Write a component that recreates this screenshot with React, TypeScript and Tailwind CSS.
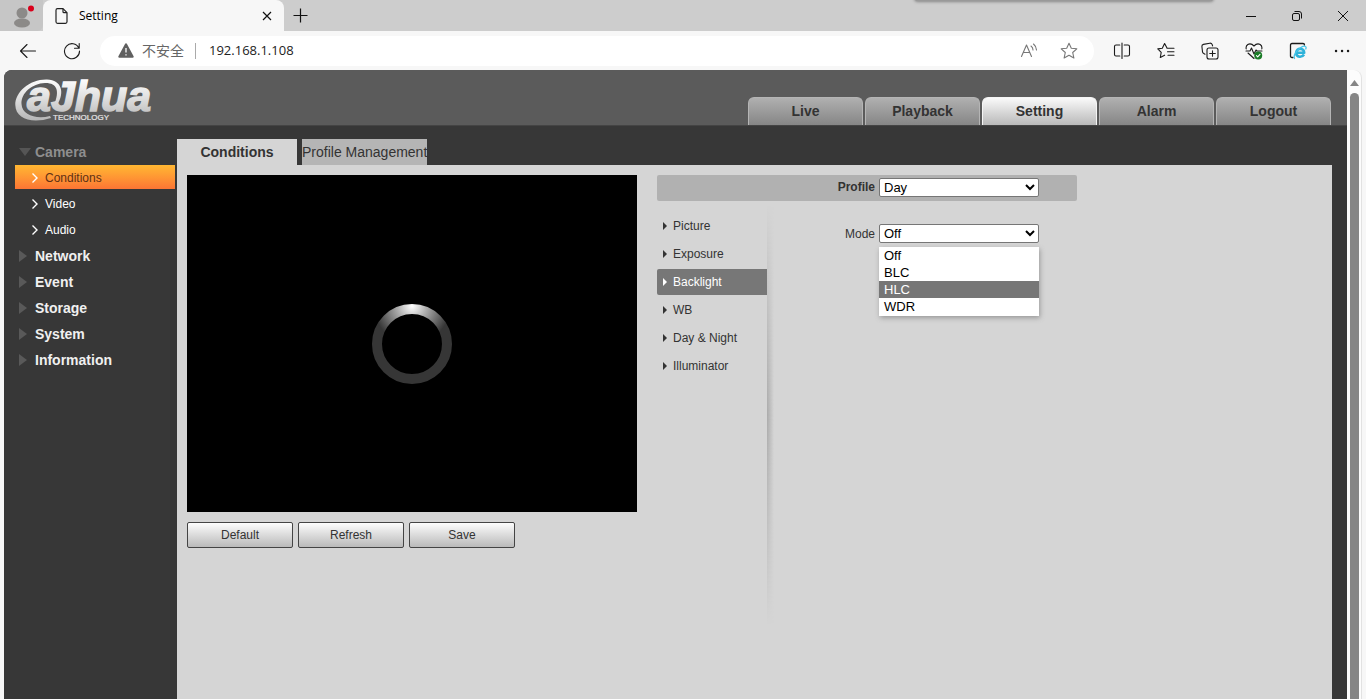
import { useState } from "react";
import type { ReactNode } from "react";

const navTabs = ["Live", "Playback", "Setting", "Alarm", "Logout"];
const cameraItems = ["Conditions", "Video", "Audio"];
const menuGroups = ["Network", "Event", "Storage", "System", "Information"];
const imageMenu = ["Picture", "Exposure", "Backlight", "WB", "Day & Night", "Illuminator"];
const modes = ["Off", "BLC", "HLC", "WDR"];

const Icon = ({ size = 18, children }: { size?: number; children: ReactNode }) => (
  <svg width={size} height={size} viewBox="0 0 18 18" fill="none" stroke="currentColor" strokeWidth="1.1" strokeLinecap="round" strokeLinejoin="round">
    {children}
  </svg>
);

const TabStrip = () => (
  <div className="relative flex h-[31px] items-stretch bg-[#cdcdcd] text-black">
    <button aria-label="Profile" className="flex w-[43px] items-center justify-end rounded-br-md bg-[#c6c6c6] pr-2">
      <svg width="24" height="24" viewBox="0 0 24 24">
        <circle cx="11" cy="9" r="5.500" fill="#8c8a88" />
        <ellipse cx="11" cy="19" rx="8" ry="4.500" fill="#8c8a88" />
        <circle cx="20" cy="4.500" r="3" fill="#d9001b" />
      </svg>
    </button>
    <div className="flex w-[241px] items-center rounded-t-lg bg-[#f7f7f7] pl-3 pr-2">
      <svg width="14" height="16" viewBox="0 0 14 16" fill="none" stroke="#222" strokeWidth="1.200" strokeLinejoin="round">
        <path d="M2.500.700h5.500l4 4v9.100q0 1.500-1.500 1.500h-8q-1.500 0-1.500-1.500v-11.600q0-1.500 1.500-1.500z" />
        <path d="M8 .700v3q0 1 1 1h3" />
      </svg>
      <span className="ml-[10px] grow text-[12px]">Setting</span>
      <button aria-label="Close tab" className="p-1">
        <svg width="10" height="10" viewBox="0 0 10 10" stroke="#111" strokeWidth="1.200"><path d="M1 1l8 8M9 1l-8 8" /></svg>
      </button>
    </div>
    <button aria-label="New tab" className="px-[9px]">
      <svg width="15" height="15" viewBox="0 0 15 15" stroke="#111" strokeWidth="1.200"><path d="M7.500 0.500v14M.500 7.500h14" /></svg>
    </button>
    <div className="grow" />
    <div className="flex">
      <button aria-label="Minimize" className="flex w-[46px] items-center justify-center">
        <svg width="10" height="10" viewBox="0 0 10 10" stroke="#111"><path d="M0 5.500h10" /></svg>
      </button>
      <button aria-label="Restore" className="flex w-[46px] items-center justify-center">
        <svg width="10" height="10" viewBox="0 0 10 10" fill="none" stroke="#111">
          <rect x=".5" y="2.500" width="7" height="7" rx="1.500" />
          <path d="M2.500.500h4.500q2.500 0 2.500 2.500v4.500" />
        </svg>
      </button>
      <button aria-label="Close" className="flex w-[46px] items-center justify-center">
        <svg width="10" height="10" viewBox="0 0 10 10" stroke="#111"><path d="M0 0l10 10M10 0L0 10" /></svg>
      </button>
    </div>
    <div className="absolute right-[152px] top-[-3px] h-1 w-[300px] rounded-b bg-[#999] shadow-[0_1px_3px_#888]" />
  </div>
);

const Toolbar = () => (
  <div className="flex h-[39px] items-center bg-[#f7f7f7] text-[#1b1b1b]">
    <button aria-label="Back" className="ml-[19px]">
      <Icon><path d="M16.500 9H1.500M8 2.500L1.500 9l6.500 6.500" /></Icon>
    </button>
    <button aria-label="Reload" className="ml-[26px]">
      <Icon><path d="M15.800 6A7.500 7.500 0 1 0 16.500 9M16.200 1.500v4.700h-4.700" /></Icon>
    </button>
    <div className="ml-[19px] flex h-[30px] grow items-center rounded-full bg-white pl-[18px] pr-4">
      <svg width="16" height="15" viewBox="0 0 16 15">
        <path d="M8 .300q.700 0 1 .600l6.600 12.300q.500 1.500-1 1.500H1.400q-1.500 0-1-1.500L7 .900q.300-.600 1-.600z" fill="#606060" />
        <path d="M8 5v4.500M8 11.200v1.300" stroke="#fff" strokeWidth="1.300" />
      </svg>
      <span className="ml-2 text-[14px] text-[#666]">不安全</span>
      <span className="ml-[11px] mr-[13px] h-4 w-px shrink-0 bg-[#aaa]" />
      <input aria-label="Address" defaultValue="192.168.1.108" className="min-w-0 grow bg-transparent text-[13px] text-[#222] outline-none" />
      <button aria-label="Read aloud" className="text-[#777]">
        <Icon><path d="M1.500 14.500L6.500 3l5 11.500M3.300 10.500h6.400M11 4q2 1.500 2 4M13.500 2q3 2.500 3 6" /></Icon>
      </button>
      <button aria-label="Add to favorites" className="ml-[22px] text-[#777]">
        <Icon><path d="M9 1.200l2.300 5 5.500.600-4.100 3.700 1.200 5.500L9 13.200l-4.900 2.800 1.200-5.500L1.200 6.800l5.500-.600z" /></Icon>
      </button>
    </div>
    <div className="ml-[19px] mr-[15px] flex gap-[26px]">
      <button aria-label="Split screen">
        <Icon><path d="M6.800 3H3Q1.500 3 1.500 4.500v8Q1.500 14 3 14h3.800M11.200 3H15q1.500 0 1.500 1.500v8q0 1.500-1.500 1.500h-3.800M9 1v15.500" /></Icon>
      </button>
      <button aria-label="Favorites">
        <Icon><path d="M10 6L7.600 1.500 5.300 6.200.800 6.900l3.400 3.500-.900 5.100 4.300-2.300M10 6.200h7M10.500 9.700H17M11 13.200h6" /></Icon>
      </button>
      <button aria-label="Collections">
        <Icon>
          <rect x="6" y="6" width="11" height="11" rx="2" />
          <path d="M11.500 8.700v5.600M8.700 11.500h5.600M4 12.200l-1.200-.600Q1.800 11 1.500 9.800L.900 4.500Q.700 2.800 2.400 2.400L8.800 1.200q1.700-.200 2.300 1.200l.500 1.500" />
        </Icon>
      </button>
      <button aria-label="Browser essentials">
        <Icon>
          <path d="M1.200 7Q.600 4 2.800 2.500 6 .800 9 4q3-3.200 6.200-1.500Q17.400 4 16.800 7M1 9h4l1.500-3 2.500 6 2-4 1 1h5M3 11l6 5.500" />
          <circle cx="13.200" cy="13.500" r="4" fill="#1b7c28" stroke="none" />
          <path d="M11.500 13.600l1.200 1.200 2.300-2.500" stroke="#fff" />
        </Icon>
      </button>
      <button aria-label="Internet Explorer mode">
        <Icon>
          <path d="M4 15.500H3Q1.500 15.500 1.500 14V3Q1.500 1.500 3 1.500h11q1.500 0 1.500 1.500" strokeWidth="1.300" />
          <path d="M15 12.500q-1.500 2.500-4.500 2.200-3.500-.500-3.300-4.200.600-3.800 4-3.800 3.800.300 4 4H8" stroke="#2eb2d9" strokeWidth="2.600" strokeLinecap="butt" />
          <path d="M5.500 16.500Q4 13 9 8t7.500-3.500q1 .500.300 2.500" stroke="#45c4e8" strokeWidth="1.300" />
        </Icon>
      </button>
      <button aria-label="More">
        <Icon><path d="M3 9h.100M9 9h.100M15 9h.100" strokeWidth="2.400" /></Icon>
      </button>
    </div>
  </div>
);

const Logo = () => (
  <svg width="150" height="55" viewBox="0 -3 150 55" role="img" aria-label="alhua Technology" className="shrink-0 overflow-visible">
    <defs>
      <linearGradient id="silver" gradientUnits="userSpaceOnUse" x1="0" y1="5" x2="0" y2="46">
        <stop offset="0" stopColor="#ffffff" />
        <stop offset=".5" stopColor="#dedede" />
        <stop offset="1" stopColor="#b8b8b8" />
      </linearGradient>
    </defs>
    <g fill="url(#silver)" className="font-['Liberation_Sans',Arial,sans-serif]">
      <path d="M42 32C50 20 47 7 32 6.500 15 6 0 19 .300 32 .600 46 17 51 36 45l-1-2C21 46.500 7 42 6.500 31 6 20 17 10.500 30 10c12-.300 15 8 9 22z" />
      <text x="12" y="38" fontSize="43" fontWeight="bold" fontStyle="italic" stroke="url(#silver)" strokeWidth="1.500">aJhua</text>
      <text x="38" y="47" fontSize="8" fill="#e6e6e6" stroke="#e6e6e6" strokeWidth=".2">TECHNOLOGY</text>
    </g>
  </svg>
);

const Header = () => (
  <header className="flex h-14 items-end justify-between rounded-tl-lg border-b border-[#444] bg-[#5b5b5b] pl-[11px] pr-4">
    <Logo />
    <nav className="flex gap-[2px]">
      {navTabs.map((tab) => (
        <a
          key={tab}
          href="#"
          className={`flex h-7 w-[115px] items-center justify-center rounded-t-md border-x border-t text-[14px] font-bold text-[#333] ${
            tab === "Setting"
              ? "border-[#f5f5f5] bg-linear-to-b from-[#fafafa] to-[#b9b9b9]"
              : "border-[#b5b5b5] bg-linear-to-b from-[#b0b0b0] to-[#868686]"
          }`}
        >
          {tab}
        </a>
      ))}
    </nav>
  </header>
);

const Sidebar = () => (
  <nav className="w-[173px] shrink-0 pl-[11px] pr-[2px]">
    <a href="#" className="flex h-[26px] items-center pl-1 text-[14px] font-bold text-[#8e8e8e]">
      <svg width="12" height="8" viewBox="0 0 12 8" className="mr-1"><path d="M0 0h12L6 8z" fill="#555" /></svg>
      Camera
    </a>
    {cameraItems.map((item) => (
      <a
        key={item}
        href="#"
        className={`mb-[2px] flex h-6 items-center pl-4 pt-[2px] text-[12px] ${
          item === "Conditions" ? "bg-linear-to-b from-[#ffb732] to-[#fc7534] text-[#5f3015]" : "text-white"
        }`}
      >
        <svg width="8" height="10" viewBox="0 0 8 10" fill="none" stroke="#fff" strokeWidth="1.400" className="mr-[6px]"><path d="M1.500.500L6 5 1.500 9.500" /></svg>
        {item}
      </a>
    ))}
    {menuGroups.map((group) => (
      <a key={group} href="#" className="flex h-[26px] items-center pl-1 text-[14px] font-bold text-[#f0f0f0]">
        <svg width="8" height="12" viewBox="0 0 8 12" className="mr-2"><path d="M0 0l8 6-8 6z" fill="#595959" /></svg>
        {group}
      </a>
    ))}
  </nav>
);

const VideoPanel = () => (
  <section className="w-[450px] shrink-0">
    <div className="flex h-[337px] items-center justify-center bg-black">
      <svg width="80" height="80" viewBox="0 0 80 80">
        <defs>
          <radialGradient id="spin" gradientUnits="userSpaceOnUse" cx="40" cy="2" r="38">
            <stop offset="0" stopColor="#fff" />
            <stop offset=".4" stopColor="#aaa" />
            <stop offset="1" stopColor="#363636" />
          </radialGradient>
        </defs>
        <circle cx="40" cy="40" r="35" fill="none" stroke="url(#spin)" strokeWidth="10" />
      </svg>
    </div>
    <div className="mt-[10px] flex gap-[5px]">
      {["Default", "Refresh", "Save"].map((label) => (
        <button key={label} className="h-[26px] w-[106px] rounded-xs border border-[#444] bg-linear-to-b from-[#fdfdfd] to-[#bababa] text-[12px] text-[#333]">
          {label}
        </button>
      ))}
    </div>
  </section>
);

const selectClass = "h-[19px] w-40 rounded-xs border border-[#767676] bg-white text-[13px] leading-4 text-black";

const SettingsPanel = () => {
  const [profile, setProfile] = useState("Day");
  const [mode, setMode] = useState("Off");

  return (
    <section className="w-[420px] shrink-0 text-[12px] text-[#333]">
      <div className="flex h-[26px] items-center gap-1 rounded-xs bg-[#b1b1b1] pb-[2px]">
        <label htmlFor="profile" className="w-[218px] text-right font-bold">Profile</label>
        <select id="profile" value={profile} onChange={(e) => setProfile(e.target.value)} className={selectClass}>
          <option>Day</option>
          <option>Night</option>
          <option>Normal</option>
        </select>
      </div>
      <div className="flex">
        <nav className="w-[110px] pt-3">
          {imageMenu.map((item) => (
            <a
              key={item}
              href="#"
              className={`mb-[2px] flex h-[26px] items-center pl-[6px] ${item === "Backlight" ? "rounded-l-xs bg-[#777] text-white" : ""}`}
            >
              <svg width="4" height="8" viewBox="0 0 4 8" fill="currentColor" className="mr-[6px]"><path d="M0 0l4 4-4 4z" /></svg>
              {item}
            </a>
          ))}
        </nav>
        <div className="mt-1 h-[420px] w-[7px] bg-linear-to-r from-[#aaa] to-[#d5d5d5] mask-y-from-50%" />
        <div className="flex grow items-start gap-1 pt-[23px]">
          <label htmlFor="mode" className="w-[101px] text-right leading-5">Mode</label>
          <div className="relative">
            <select id="mode" value={mode} onChange={(e) => setMode(e.target.value)} className={`block ${selectClass}`}>
              {modes.map((m) => (
                <option key={m}>{m}</option>
              ))}
            </select>
            <ul role="listbox" aria-label="Mode" className="absolute left-0 top-[23px] w-40 bg-white pb-px text-[13px] leading-[17px] text-black shadow-[1px_2px_5px_#999]">
              {modes.map((m) => (
                <li key={m} role="option" aria-selected={m === "HLC"} onClick={() => setMode(m)} className={`pl-[5px] ${m === "HLC" ? "bg-[#767676] text-white" : ""}`}>
                  {m}
                </li>
              ))}
            </ul>
          </div>
        </div>
      </div>
    </section>
  );
};

const App = () => {
  return (
    <div className="flex h-screen flex-col overflow-hidden bg-[#f7f7f7] font-['Open_Sans','Noto_Sans_CJK_SC',sans-serif]">
      <TabStrip />
      <Toolbar />
      <div className="flex min-h-0 grow pl-1">
        <div className="flex min-w-0 grow flex-col rounded-tl-lg bg-[#373737] font-['Liberation_Sans',Arial,sans-serif]">
          <Header />
          <div className="flex min-h-0 grow pr-[15px] pt-[13px]">
            <Sidebar />
            <main className="flex min-w-0 grow flex-col">
              <div className="flex h-[26px] shrink-0 gap-[5px] text-[14px] text-[#333]">
                <button className="w-[120px] bg-[#d5d5d5] font-bold">Conditions</button>
                <button className="w-[125px] whitespace-nowrap bg-[#b5b5b5]">Profile Management</button>
              </div>
              <div className="flex grow gap-5 bg-[#d5d5d5] p-[10px]">
                <VideoPanel />
                <SettingsPanel />
              </div>
            </main>
          </div>
        </div>
        <div className="mr-1 flex w-[15px] shrink-0 flex-col items-center rounded-tr-lg border-r border-[#e2e2e2] bg-[#fcfcfc] pt-[10px]">
          <svg width="9" height="6" viewBox="0 0 9 6"><path d="M4.500 0L9 6H0z" fill="#858585" /></svg>
          <div className="mt-[7px] w-[9px] grow rounded-t-full bg-[#858585]" />
        </div>
      </div>
    </div>
  );
};

export default App;
